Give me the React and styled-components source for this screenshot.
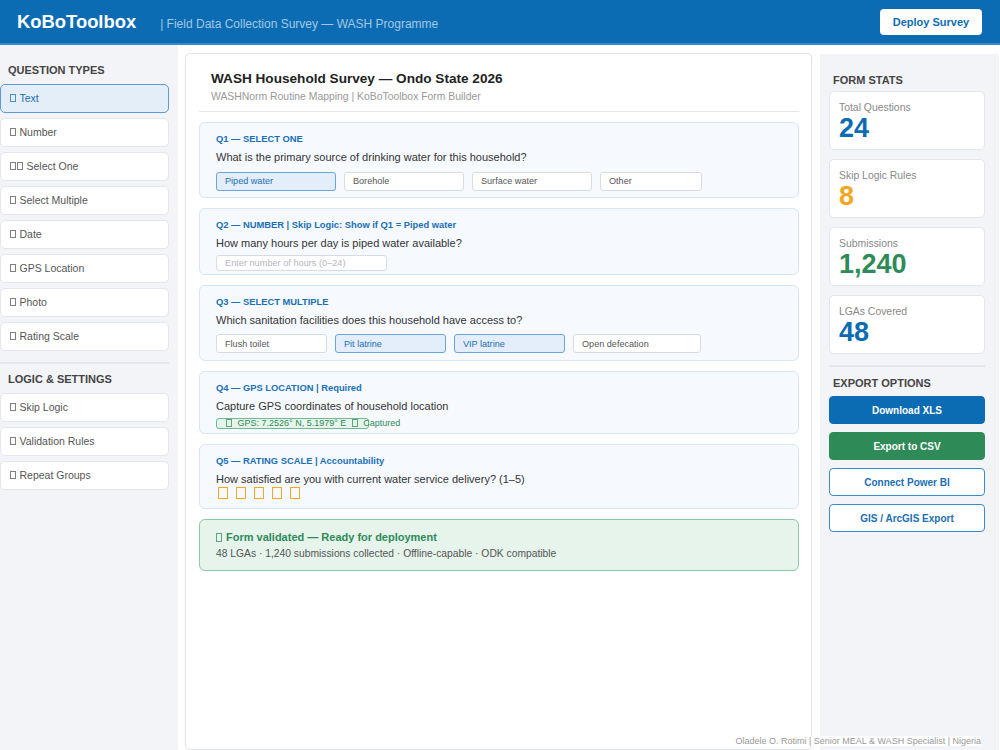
import { createGlobalStyle, styled } from 'styled-components';

const GlobalStyle = createGlobalStyle`
  html, body { margin: 0; padding: 0; background: #fff; }
  body { font-family: "Liberation Sans", Arial, sans-serif; color: #333; }
  * { box-sizing: border-box; }
`;

// the emoji icons of the original show as empty glyph boxes, drawn here as small outlined boxes
const questionTypes = [
  { icons: 1, label: 'Text', active: true },
  { icons: 1, label: 'Number' },
  { icons: 2, label: 'Select One' },
  { icons: 1, label: 'Select Multiple' },
  { icons: 1, label: 'Date' },
  { icons: 1, label: 'GPS Location' },
  { icons: 1, label: 'Photo' },
  { icons: 1, label: 'Rating Scale' },
];

const logicItems = [
  { icons: 1, label: 'Skip Logic' },
  { icons: 1, label: 'Validation Rules' },
  { icons: 1, label: 'Repeat Groups' },
];

const stats = [
  { label: 'Total Questions', value: '24', color: '#0b6cb3' },
  { label: 'Skip Logic Rules', value: '8', color: '#f5a623' },
  { label: 'Submissions', value: '1,240', color: '#2e8b57' },
  { label: 'LGAs Covered', value: '48', color: '#0b6cb3' },
];

const exports = [
  { label: 'Download XLS', variant: 'blue' },
  { label: 'Export to CSV', variant: 'green' },
  { label: 'Connect Power BI', variant: 'outline' },
  { label: 'GIS / ArcGIS Export', variant: 'outline' },
];

const SideItem = ({ item }) => (
  <TypeItem $active={item.active}>
    {Array.from({ length: item.icons }).map((_, i) => (
      <Tofu key={i} $w={6} $h={8} />
    ))}
    <ItemLabel>{item.label}</ItemLabel>
  </TypeItem>
);

export default function App() {
  return (
    <>
      <GlobalStyle />
      <Page>
        <Header>
          <Brand>
            <Logo>KoBoToolbox</Logo>
            <Tagline>| Field Data Collection Survey — WASH Programme</Tagline>
          </Brand>
          <DeployButton>Deploy Survey</DeployButton>
        </Header>

        <Body>
          <LeftSidebar>
            <SideTitle $inset={8}>Question Types</SideTitle>
            <ItemList>
              {questionTypes.map((q) => (
                <SideItem key={q.label} item={q} />
              ))}
            </ItemList>
            <Divider />
            <SideTitle $inset={8}>Logic &amp; Settings</SideTitle>
            <ItemList>
              {logicItems.map((q) => (
                <SideItem key={q.label} item={q} />
              ))}
            </ItemList>
          </LeftSidebar>

          <Canvas>
            <FormHead>
              <FormTitle>WASH Household Survey — Ondo State 2026</FormTitle>
              <FormSub>WASHNorm Routine Mapping | KoBoToolbox Form Builder</FormSub>
            </FormHead>

            <Questions>
              <QuestionCard>
                <QLabel>Q1 — SELECT ONE</QLabel>
                <QText>What is the primary source of drinking water for this household?</QText>
                <Options>
                  <Option $w={120} $selected>Piped water</Option>
                  <Option $w={120}>Borehole</Option>
                  <Option $w={120}>Surface water</Option>
                  <Option $w={102}>Other</Option>
                </Options>
              </QuestionCard>

              <QuestionCard>
                <QLabel>Q2 — NUMBER | Skip Logic: Show if Q1 = Piped water</QLabel>
                <QText>How many hours per day is piped water available?</QText>
                <NumberInput>Enter number of hours (0–24)</NumberInput>
              </QuestionCard>

              <QuestionCard>
                <QLabel>Q3 — SELECT MULTIPLE</QLabel>
                <QText>Which sanitation facilities does this household have access to?</QText>
                <Options>
                  <Option $w={111}>Flush toilet</Option>
                  <Option $w={111} $selected>Pit latrine</Option>
                  <Option $w={111} $selected>VIP latrine</Option>
                  <Option $w={128}>Open defecation</Option>
                </Options>
              </QuestionCard>

              <QuestionCard>
                <QLabel>Q4 — GPS LOCATION | Required</QLabel>
                <QText>Capture GPS coordinates of household location</QText>
                <GpsBadge>
                  <Tofu $w={6} $h={8} /> GPS: 7.2526° N, 5.1979° E <Tofu $w={6} $h={8} /> Captured
                </GpsBadge>
              </QuestionCard>

              <QuestionCard>
                <QLabel>Q5 — RATING SCALE | Accountability</QLabel>
                <QText>How satisfied are you with current water service delivery? (1–5)</QText>
                <Stars>
                  {[1, 2, 3, 4, 5].map((n) => (
                    <Star key={n} />
                  ))}
                </Stars>
              </QuestionCard>

              <ValidCard>
                <ValidTitle>
                  <Tofu $w={6} $h={9} /> Form validated — Ready for deployment
                </ValidTitle>
                <ValidText>48 LGAs · 1,240 submissions collected · Offline-capable · ODK compatible</ValidText>
              </ValidCard>
            </Questions>
          </Canvas>

          <RightSidebar>
            <SideTitle $inset={4} $gap={4}>Form Stats</SideTitle>
            <StatList>
              {stats.map((s) => (
                <StatCard key={s.label}>
                  <StatLabel>{s.label}</StatLabel>
                  <StatValue $color={s.color}>{s.value}</StatValue>
                </StatCard>
              ))}
            </StatList>
            <Divider />
            <SideTitle $inset={4}>Export Options</SideTitle>
            <ButtonList>
              {exports.map((e) => (
                <ExportButton key={e.label} $variant={e.variant}>
                  {e.label}
                </ExportButton>
              ))}
            </ButtonList>
          </RightSidebar>
        </Body>

        <Credit>Oladele O. Rotimi | Senior MEAL &amp; WASH Specialist | Nigeria</Credit>
      </Page>
    </>
  );
}

const Page = styled.div`
  position: relative;
  width: 1000px;
  height: 750px;
  overflow: hidden;
  display: flex;
  flex-direction: column;
`;

const Header = styled.header`
  height: 45px;
  flex: none;
  background: #0b6cb3;
  border-bottom: 2px solid #3889c7;
  display: flex;
  align-items: center;
  justify-content: space-between;
  padding: 0 18px 0 17px;
`;

const Brand = styled.div`
  display: flex;
  align-items: baseline;
  gap: 24px;
`;

const Logo = styled.div`
  color: #fff;
  font-size: 18.4px;
  font-weight: bold;
`;

const Tagline = styled.div`
  color: #a3c8e6;
  font-size: 12px;
`;

const DeployButton = styled.button`
  width: 102px;
  height: 26px;
  border: none;
  border-radius: 4px;
  background: #fff;
  color: #0b6cb3;
  font-family: "Liberation Sans", Arial, sans-serif;
  font-size: 11px;
  font-weight: bold;
  padding: 0;
`;

const Body = styled.div`
  flex: 1;
  display: grid;
  grid-template-columns: 178px 627px 180px;
  column-gap: 7px;
  min-height: 0;
`;

const LeftSidebar = styled.aside`
  background: #f3f4f8;
  padding: 19px 9px 0 0;
`;

const RightSidebar = styled.aside`
  background: #f3f4f8;
  margin: 9px 0 0 1px;
  padding: 20px 14px 0 9px;
`;

const SideTitle = styled.h3`
  margin: 0 0 ${({ $gap = 6.5 }) => $gap}px ${({ $inset }) => $inset}px;
  font-size: 11px;
  line-height: 13px;
  font-weight: bold;
  text-transform: uppercase;
  color: #444;
`;

const ItemList = styled.div`
  display: flex;
  flex-direction: column;
  gap: 5px;
`;

const TypeItem = styled.div`
  height: 29px;
  display: flex;
  align-items: center;
  gap: 1px;
  padding-left: 9px;
  font-size: 10.5px;
  color: ${({ $active }) => ($active ? '#1a6fb5' : '#555')};
  background: ${({ $active }) => ($active ? '#e3eef9' : '#fff')};
  border: 1px solid ${({ $active }) => ($active ? '#5b9bd5' : '#e3e6eb')};
  border-radius: 5px;
`;

const ItemLabel = styled.span`
  margin-left: 2.5px;
`;

const Tofu = styled.span`
  display: inline-block;
  flex: none;
  width: ${({ $w }) => $w}px;
  height: ${({ $h }) => $h}px;
  border: 1px solid currentColor;
  opacity: 0.75;
  vertical-align: -1px;
`;

const Divider = styled.hr`
  border: none;
  border-top: 2px solid #e4e6eb;
  margin: 11px 0 9.5px 0;
`;

const Canvas = styled.main`
  margin-top: 8px;
  background: #fff;
  border: 1px solid #e2e5e9;
  border-radius: 5px;
  box-shadow: 0 1px 3px rgba(0, 0, 0, 0.05);
  padding: 0 12px 0 13px;
  min-height: 0;
`;

const FormHead = styled.div`
  padding: 17px 12px 8px;
  border-bottom: 1px solid #e6e8eb;
`;

const FormTitle = styled.h1`
  margin: 0;
  font-size: 13.6px;
  line-height: 16px;
  font-weight: bold;
  color: #222;
`;

const FormSub = styled.div`
  margin-top: 4px;
  font-size: 10.4px;
  line-height: 12px;
  color: #999;
`;

const Questions = styled.div`
  display: flex;
  flex-direction: column;
  gap: 10px;
  padding-top: 10px;
  width: 600px;
`;

const QuestionCard = styled.section`
  background: #f6faff;
  border: 1px solid #d5e6f5;
  border-radius: 6px;
  padding: 10px 16px 0;
  display: flex;
  flex-direction: column;
  align-items: flex-start;
`;

const QLabel = styled.div`
  font-size: 9.35px;
  font-weight: bold;
  color: #1a6fb5;
  line-height: 12px;
`;

const QText = styled.div`
  margin-top: 5px;
  font-size: 11px;
  color: #333;
  line-height: 14px;
`;

const Options = styled.div`
  display: flex;
  gap: 8px;
  margin: 7.5px 0 6.5px;
`;

const Option = styled.div`
  width: ${({ $w }) => $w}px;
  height: 19px;
  display: flex;
  align-items: center;
  padding-left: 8px;
  font-size: 9.1px;
  border-radius: 3px;
  color: ${({ $selected }) => ($selected ? '#1a6fb5' : '#555')};
  background: ${({ $selected }) => ($selected ? '#e3eefa' : '#fff')};
  border: 1px solid ${({ $selected }) => ($selected ? '#6aa6da' : '#d8dbe0')};
`;

const NumberInput = styled.div`
  margin: 5px 0 2.5px;
  width: 171px;
  height: 16px;
  display: flex;
  align-items: center;
  padding-left: 8px;
  font-size: 9.2px;
  color: #b4b7bc;
  background: #fff;
  border: 1px solid #d8dbe0;
  border-radius: 3px;
`;

const GpsBadge = styled.div`
  margin: 5px 0 4.5px;
  width: 153px;
  height: 11px;
  padding-left: 9px;
  display: flex;
  align-items: center;
  gap: 3px;
  white-space: pre;
  font-size: 9px;
  color: #2e8b57;
  background: #e6f4ec;
  border: 1.5px solid #6dbb8b;
  border-radius: 3px;
  overflow: visible;
`;

const Stars = styled.div`
  display: flex;
  gap: 8px;
  margin: 1px 0 9px 2px;
`;

const Star = styled.span`
  width: 10px;
  height: 12px;
  border: 1px solid #f5a623;
`;

const ValidCard = styled.section`
  background: #e6f4ec;
  border: 1.5px solid #8dc9a5;
  border-radius: 6px;
  padding: 11px 16px 10px;
`;

const ValidTitle = styled.div`
  font-size: 11px;
  line-height: 13px;
  font-weight: bold;
  color: #2e8b57;
  display: flex;
  align-items: center;
  gap: 4px;
`;

const ValidText = styled.div`
  margin-top: 4px;
  font-size: 10.3px;
  line-height: 12px;
  color: #555;
`;

const StatList = styled.div`
  display: flex;
  flex-direction: column;
  gap: 9px;
`;

const StatCard = styled.div`
  height: 59px;
  background: #fff;
  border: 1px solid #e3e6eb;
  border-radius: 5px;
  padding: 9px 9px 0;
`;

const StatLabel = styled.div`
  font-size: 10.4px;
  line-height: 13px;
  color: #888;
`;

const StatValue = styled.div`
  font-size: 27px;
  font-weight: bold;
  line-height: 28px;
  color: ${({ $color }) => $color};
`;

const ButtonList = styled.div`
  display: flex;
  flex-direction: column;
  gap: 8px;
`;

const variants = {
  blue: { bg: '#0b6cb3', fg: '#fff', border: '#0b6cb3' },
  green: { bg: '#2e8b57', fg: '#fff', border: '#2e8b57' },
  outline: { bg: '#fff', fg: '#1a6fb5', border: '#3a8ad0' },
};

const ExportButton = styled.button`
  height: 28px;
  width: 100%;
  border-radius: 4px;
  font-family: "Liberation Sans", Arial, sans-serif;
  font-size: 10px;
  font-weight: bold;
  padding: 0;
  background: ${({ $variant }) => variants[$variant].bg};
  color: ${({ $variant }) => variants[$variant].fg};
  border: 1.5px solid ${({ $variant }) => variants[$variant].border};
`;

const Credit = styled.div`
  position: absolute;
  right: 19px;
  bottom: 4px;
  font-size: 9px;
  color: #999;
  background: #fff;
`;
